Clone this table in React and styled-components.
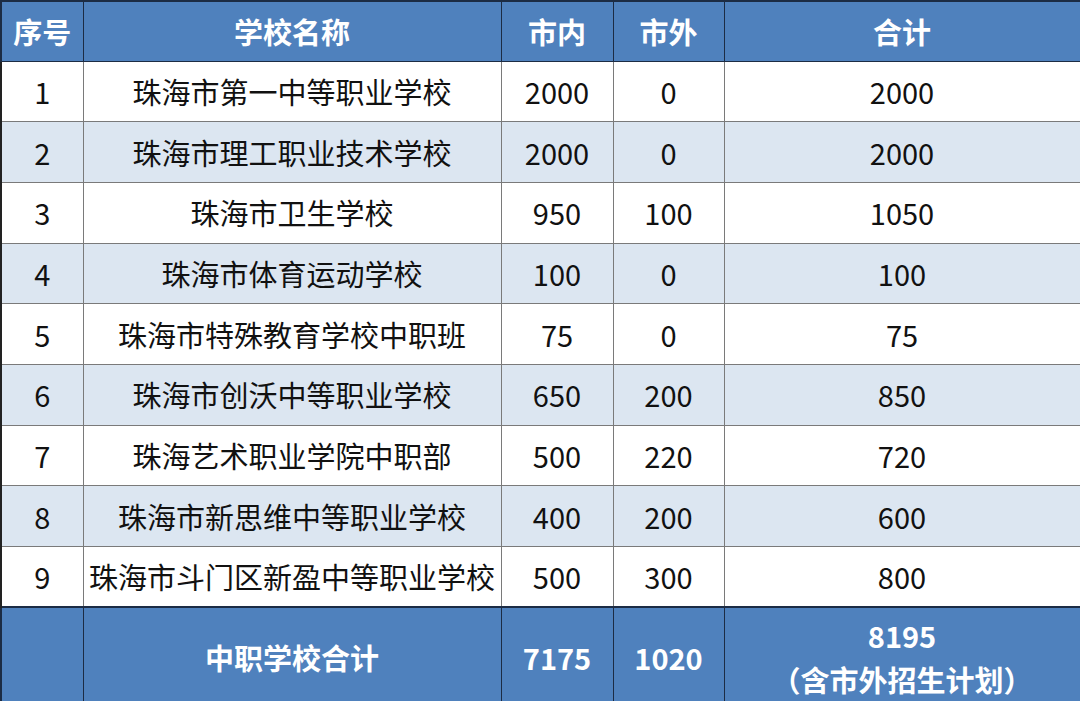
import React from 'react'
import styled, { createGlobalStyle } from 'styled-components'

const GlobalStyle = createGlobalStyle`
  html, body {
    margin: 0;
    padding: 0;
    background: #fff;
    overflow: hidden;
  }
  body {
    font-family: "Noto Sans CJK SC", "Noto Sans", sans-serif;
  }
`;

const widths = [82, 418, 112, 111, 357];
const headers = ['序号', '学校名称', '市内', '市外', '合计'];

const rows = [
  [1, '珠海市第一中等职业学校', 2000, 0, 2000],
  [2, '珠海市理工职业技术学校', 2000, 0, 2000],
  [3, '珠海市卫生学校', 950, 100, 1050],
  [4, '珠海市体育运动学校', 100, 0, 100],
  [5, '珠海市特殊教育学校中职班', 75, 0, 75],
  [6, '珠海市创沃中等职业学校', 650, 200, 850],
  [7, '珠海艺术职业学院中职部', 500, 220, 720],
  [8, '珠海市新思维中等职业学校', 400, 200, 600],
  [9, '珠海市斗门区新盈中等职业学校', 500, 300, 800],
];

export default function App() {
  return (
    <>
      <GlobalStyle />
      <Table>
        <colgroup>
          {widths.map((w, i) => <Col key={i} $w={w} />)}
        </colgroup>
        <thead>
          <HeadRow>
            {headers.map(h => <th key={h}>{h}</th>)}
          </HeadRow>
        </thead>
        <tbody>
          {rows.map((r, i) => (
            <BodyRow key={r[0]} $alt={i % 2 === 1}>
              {r.map((c, j) => <td key={j}>{c}</td>)}
            </BodyRow>
          ))}
          <FootRow>
            <td></td>
            <td>中职学校合计</td>
            <td>7175</td>
            <td>1020</td>
            <td>
              <TotalLine>8195</TotalLine>
              <TotalLine>（含市外招生计划）</TotalLine>
            </td>
          </FootRow>
        </tbody>
      </Table>
    </>
  )
}

const Table = styled.table`
  width: 1080px;
  table-layout: fixed;
  border-collapse: collapse;
  color: #111;
  font-size: 29px;
  text-align: center;
  td, th {
    padding: 0;
    white-space: nowrap;
  }
`;

const Col = styled.col`
  width: ${p => p.$w}px;
`;

const HeadRow = styled.tr`
  height: 60px;
  background: #4f81bd;
  color: #fff;
  th {
    font-weight: 700;
    line-height: 1;
    border: 1.5px solid #1c2c44;
    border-top: 2px solid #1c2c44;
  }
  th:first-child { border-left: 2px solid #1c2c44; }
  th:last-child { border-right: 3px solid #1c2c44; }
`;

const BodyRow = styled.tr`
  height: 60.7px;
  background: ${p => (p.$alt ? '#dce6f1' : '#fff')};
  td {
    border: 1.5px solid #7a7a7a;
    line-height: 1;
  }
  td:first-child { border-left: 2px solid #222; }
  td:last-child { border-right: 3px solid #222; }
`;

const FootRow = styled.tr`
  height: 100px;
  background: #4f81bd;
  color: #fff;
  td {
    font-weight: 700;
    border: 1.5px solid #1c2c44;
    border-top: 2px solid #1c2c44;
  }
  td:first-child { border-left: 2px solid #1c2c44; }
  td:last-child { border-right: 3px solid #1c2c44; }
`;

const TotalLine = styled.div`
  line-height: 44px;
`;
